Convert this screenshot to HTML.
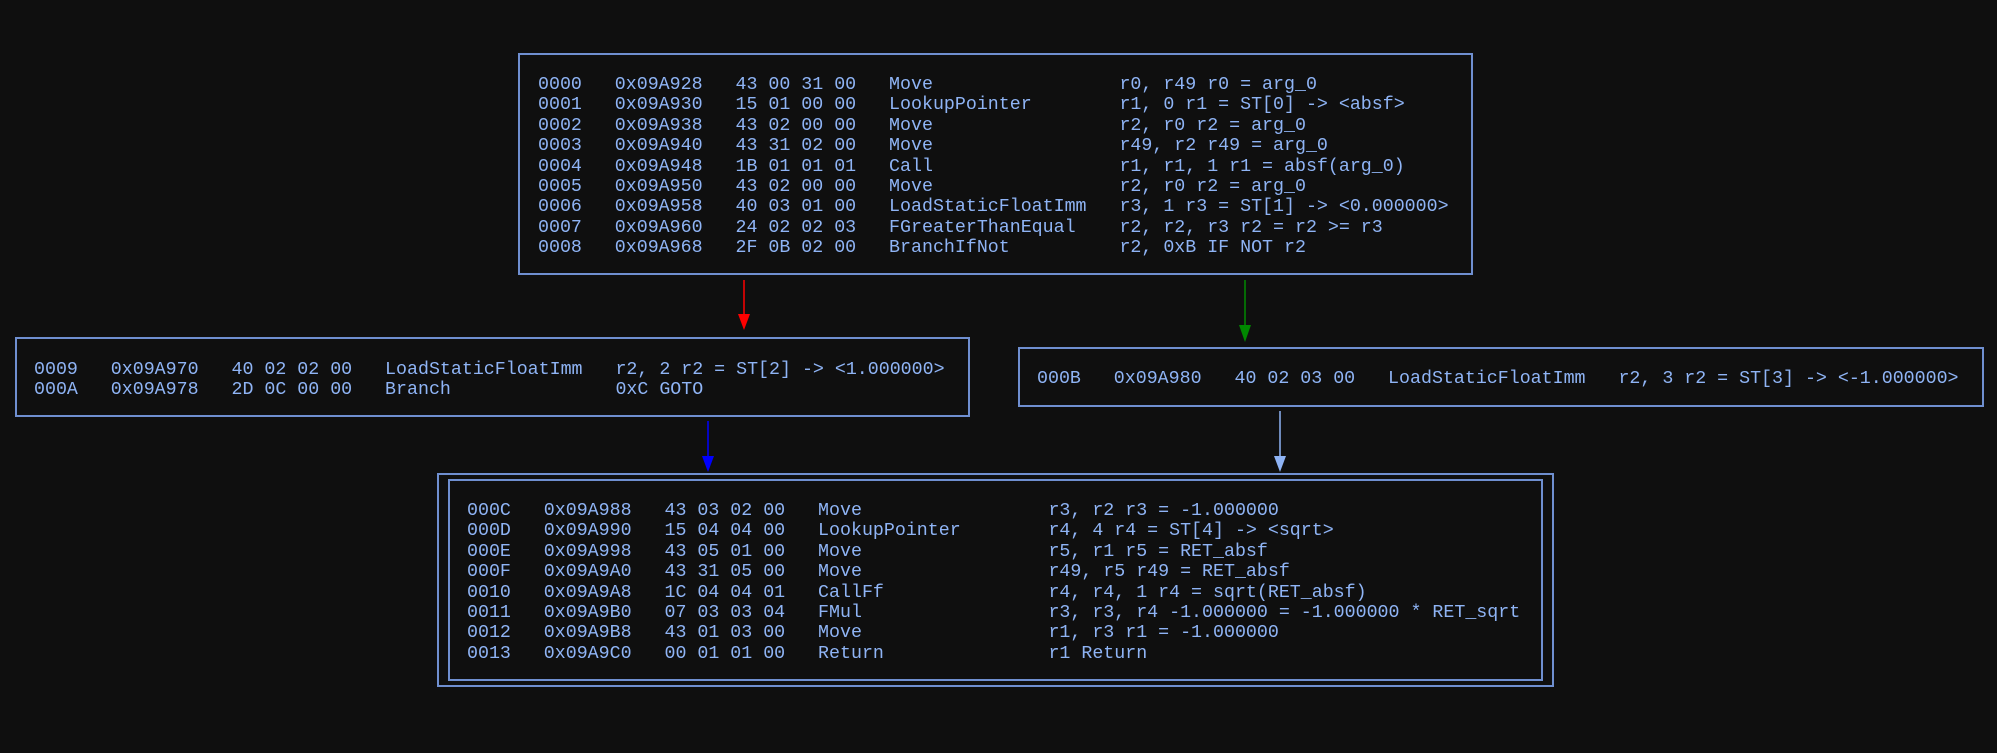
<!DOCTYPE html>
<html><head><style>
html,body{margin:0;padding:0;background:#0f0f0f;width:1997px;height:753px;overflow:hidden;position:relative}
.b{position:absolute;border:2px solid #6f8fd0;box-sizing:border-box}
pre{position:absolute;margin:0;font-family:"Liberation Mono","DejaVu Sans Mono",monospace;font-size:18.3px;line-height:20.4px;color:#8fb4f5;white-space:pre}
svg{position:absolute;left:0;top:0}
</style></head><body>
<div class="b" style="left:518px;top:53px;width:955px;height:222px"></div>
<pre style="left:538px;top:75px">0000   0x09A928   43 00 31 00   Move                 r0, r49 r0 = arg_0
0001   0x09A930   15 01 00 00   LookupPointer        r1, 0 r1 = ST[0] -&gt; &lt;absf&gt;
0002   0x09A938   43 02 00 00   Move                 r2, r0 r2 = arg_0
0003   0x09A940   43 31 02 00   Move                 r49, r2 r49 = arg_0
0004   0x09A948   1B 01 01 01   Call                 r1, r1, 1 r1 = absf(arg_0)
0005   0x09A950   43 02 00 00   Move                 r2, r0 r2 = arg_0
0006   0x09A958   40 03 01 00   LoadStaticFloatImm   r3, 1 r3 = ST[1] -&gt; &lt;0.000000&gt;
0007   0x09A960   24 02 02 03   FGreaterThanEqual    r2, r2, r3 r2 = r2 &gt;= r3
0008   0x09A968   2F 0B 02 00   BranchIfNot          r2, 0xB IF NOT r2</pre>

<div class="b" style="left:15px;top:337px;width:955px;height:80px"></div>
<pre style="left:34px;top:360px">0009   0x09A970   40 02 02 00   LoadStaticFloatImm   r2, 2 r2 = ST[2] -&gt; &lt;1.000000&gt;
000A   0x09A978   2D 0C 00 00   Branch               0xC GOTO</pre>

<div class="b" style="left:1018px;top:347px;width:966px;height:60px"></div>
<pre style="left:1037px;top:369px">000B   0x09A980   40 02 03 00   LoadStaticFloatImm   r2, 3 r2 = ST[3] -&gt; &lt;-1.000000&gt;</pre>

<div class="b" style="left:437px;top:473px;width:1117px;height:214px"></div>
<div class="b" style="left:448px;top:479px;width:1095px;height:202px"></div>
<pre style="left:467px;top:501px">000C   0x09A988   43 03 02 00   Move                 r3, r2 r3 = -1.000000
000D   0x09A990   15 04 04 00   LookupPointer        r4, 4 r4 = ST[4] -&gt; &lt;sqrt&gt;
000E   0x09A998   43 05 01 00   Move                 r5, r1 r5 = RET_absf
000F   0x09A9A0   43 31 05 00   Move                 r49, r5 r49 = RET_absf
0010   0x09A9A8   1C 04 04 01   CallFf               r4, r4, 1 r4 = sqrt(RET_absf)
0011   0x09A9B0   07 03 03 04   FMul                 r3, r3, r4 -1.000000 = -1.000000 * RET_sqrt
0012   0x09A9B8   43 01 03 00   Move                 r1, r3 r1 = -1.000000
0013   0x09A9C0   00 01 01 00   Return               r1 Return</pre>

<svg width="1997" height="753">
<line x1="744" y1="280" x2="744" y2="316" stroke="#f00" stroke-width="1.5"/><polygon points="738,314 750,314 744,330" fill="#f00"/>
<line x1="1245" y1="280" x2="1245" y2="327" stroke="#080" stroke-width="1.5"/><polygon points="1239,325 1251,325 1245,342" fill="#080"/>
<line x1="708" y1="421" x2="708" y2="458" stroke="#00f" stroke-width="1.5"/><polygon points="702,456 714,456 708,472" fill="#00f"/>
<line x1="1280" y1="411" x2="1280" y2="458" stroke="#8fb4f5" stroke-width="1.5"/><polygon points="1274,456 1286,456 1280,472" fill="#8fb4f5"/>
</svg>
</body></html>
